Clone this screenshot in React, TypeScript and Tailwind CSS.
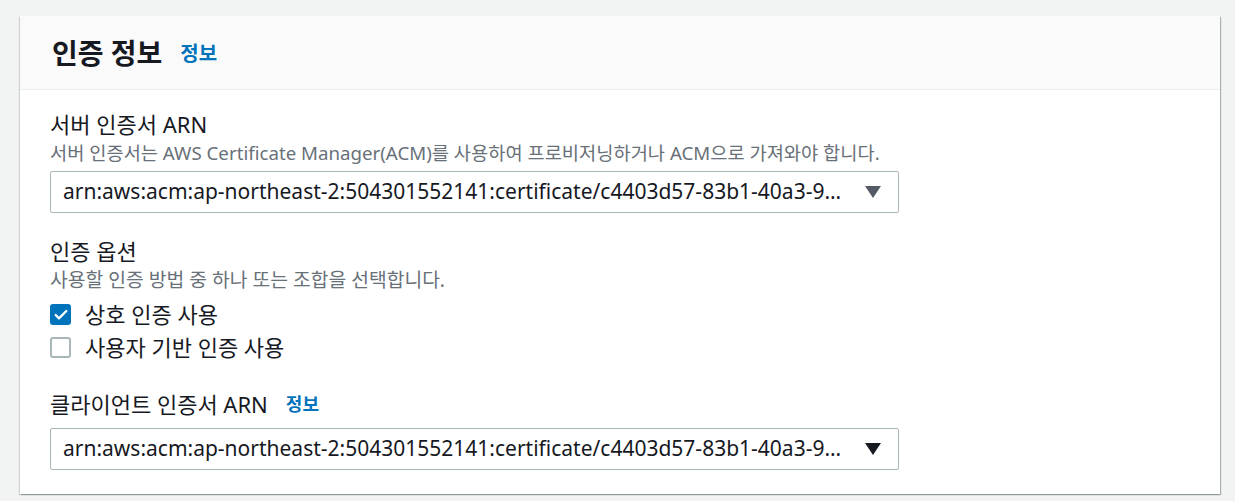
import { Check } from 'lucide-react'

const font = { fontFamily: '"Noto Sans", "Noto Sans CJK KR", sans-serif' }

const arn = 'arn:aws:acm:ap-northeast-2:504301552141:certificate/c4403d57-83b1-40a3-9…'

function SelectBox({ value, arrow }: { value: string; arrow: string }) {
  return (
    <div className="flex h-[42px] w-[849px] items-center justify-between rounded-[2px] border border-[#aab7b8] bg-white pl-[12px] pr-[16px]">
      <span className="truncate text-[21px] text-[#16191f]">{value}</span>
      <svg width="18" height="14" viewBox="0 0 18 14" className="ml-4 shrink-0">
        <polygon points="1,1 17,1 9,13" fill={arrow} />
      </svg>
    </div>
  )
}

function CheckRow({ label, checked }: { label: string; checked?: boolean }) {
  return (
    <label className="flex h-[33px] items-center gap-[14px]">
      {checked ? (
        <span className="flex h-[21px] w-[21px] items-center justify-center rounded-[3px] bg-[#0073bb]">
          <Check size={16} strokeWidth={3.5} className="text-white" />
        </span>
      ) : (
        <span className="h-[21px] w-[21px] rounded-[3px] border-2 border-[#aab7b8] bg-white" />
      )}
      <span className="text-[22px] text-[#16191f]">{label}</span>
    </label>
  )
}

export default function App() {
  return (
    <div className="min-h-[501px] bg-[#f2f3f3] px-[20px] pt-[16px]" style={font}>
      <div className="w-[1200px] bg-white shadow-[1px_1px_1px_0_rgba(0,28,36,0.3),-1px_1px_1px_0_rgba(0,28,36,0.15)]">
        {/* header */}
        <div className="flex h-[74px] items-center gap-[18px] border-b border-[#eaeded] bg-[#fafafa] pl-[32px]">
          <h2 className="text-[28px] font-bold text-[#16191f]">인증 정보</h2>
          <a className="pt-[2px] text-[20px] font-bold text-[#0073bb]">정보</a>
        </div>

        {/* body */}
        <div className="px-[30px] pb-[24px] pt-[18px]">
          <div className="flex flex-col">
            <span className="text-[22px] leading-[32px] text-[#16191f]">서버 인증서 ARN</span>
            <span className="whitespace-nowrap text-[18.7px] leading-[26px] text-[#687078]">
              서버 인증서는 AWS Certificate Manager(ACM)를 사용하여 프로비저닝하거나 ACM으로 가져와야 합니다.
            </span>
            <div className="mt-[5px]">
              <SelectBox value={arn} arrow="#545b64" />
            </div>
          </div>

          <div className="mt-[22px] flex flex-col">
            <span className="text-[22px] leading-[32px] text-[#16191f]">인증 옵션</span>
            <span className="whitespace-nowrap text-[19.3px] leading-[26px] text-[#687078]">
              사용할 인증 방법 중 하나 또는 조합을 선택합니다.
            </span>
            <div className="mt-[5px] flex flex-col">
              <CheckRow label="상호 인증 사용" checked />
              <CheckRow label="사용자 기반 인증 사용" />
            </div>
          </div>

          <div className="mt-[24px] flex flex-col">
            <div className="flex items-center gap-[18px]">
              <span className="text-[22px] leading-[32px] text-[#16191f]">클라이언트 인증서 ARN</span>
              <a className="text-[18px] font-bold text-[#0073bb]">정보</a>
            </div>
            <div className="mt-[8px]">
              <SelectBox value={arn} arrow="#16191f" />
            </div>
          </div>
        </div>
      </div>
    </div>
  )
}
